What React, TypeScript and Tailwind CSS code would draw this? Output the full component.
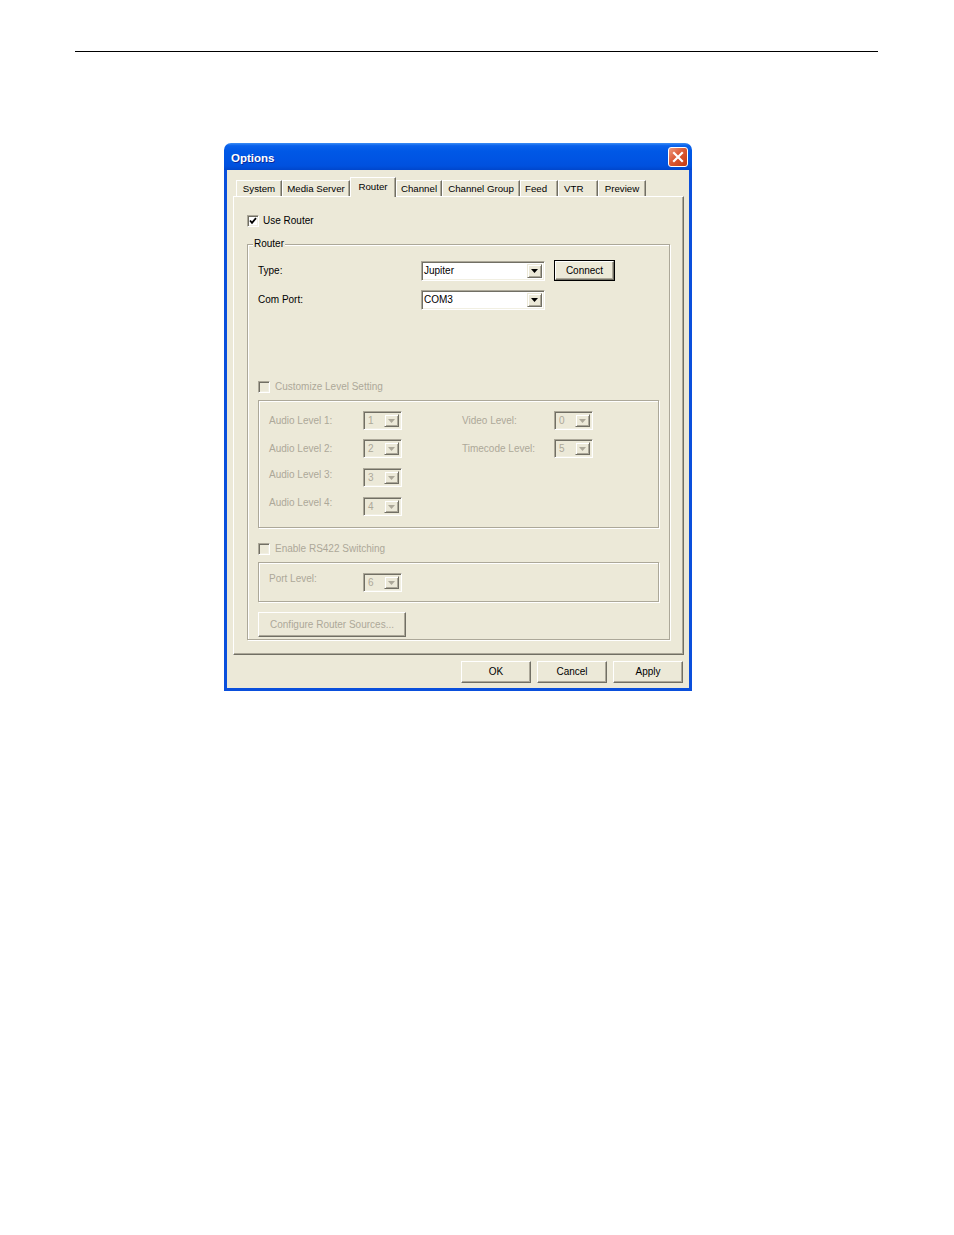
import React from 'react';

function Arrow({ disabled }: { disabled?: boolean }) {
  return (
    <div className="w-[15px] h-full shrink-0 bg-[#ECE9D8] border border-t-[#ECE9D8] border-l-[#ECE9D8] border-r-[#716F64] border-b-[#716F64] shadow-[inset_1px_1px_0_#ffffff,inset_-1px_-1px_0_#ACA899] flex items-center justify-center">
      <svg width="7" height="4" viewBox="0 0 7 4">
        <polygon points="0,0 7,0 3.5,4" fill={disabled ? '#ACA899' : '#000000'} />
      </svg>
    </div>
  );
}

function Combo({ value }: { value: string }) {
  return (
    <div className="w-[124px] h-[20px] bg-white border border-t-[#ACA899] border-l-[#ACA899] border-r-white border-b-white shadow-[inset_1px_1px_0_#716F64,inset_-1px_-1px_0_#F1EFE2] flex items-stretch p-[2px]">
      <div className="flex-1 leading-[14px] text-black">{value}</div>
      <Arrow />
    </div>
  );
}

function SmallCombo({ value }: { value: string }) {
  return (
    <div className="w-[39px] h-[19px] shrink-0 bg-[#ECE9D8] border border-t-[#ACA899] border-l-[#ACA899] border-r-white border-b-white shadow-[inset_1px_1px_0_#716F64,inset_-1px_-1px_0_#F1EFE2] flex items-stretch p-[2px]">
      <div className="flex-1 pl-[2px] leading-[13px] text-[#ACA899]">{value}</div>
      <Arrow disabled />
    </div>
  );
}

function CheckBox({ checked, disabled }: { checked?: boolean; disabled?: boolean }) {
  return (
    <div
      className={
        disabled
          ? 'w-[12px] h-[12px] shrink-0 bg-[#ECE9D8] border border-t-[#ACA899] border-l-[#ACA899] border-r-white border-b-white shadow-[inset_1px_1px_0_#716F64,inset_-1px_-1px_0_#F1EFE2]'
          : 'w-[12px] h-[12px] shrink-0 bg-white border border-t-[#ACA899] border-l-[#ACA899] border-r-white border-b-white shadow-[inset_1px_1px_0_#716F64,inset_-1px_-1px_0_#F1EFE2] flex items-center justify-center'
      }
    >
      {checked && (
        <svg width="8" height="8" viewBox="0 0 8 8">
          <path d="M1 3.5 L3 5.8 L7 1.2" stroke="#000" strokeWidth="1.8" fill="none" />
        </svg>
      )}
    </div>
  );
}

function Button({ label, disabled, w }: { label: string; disabled?: boolean; w: string }) {
  return (
    <div
      className={`${w} h-full bg-[#ECE9D8] border border-t-white border-l-white border-r-[#716F64] border-b-[#716F64] shadow-[inset_-1px_-1px_0_#ACA899] flex items-center justify-center leading-[12px] ${
        disabled ? 'text-[#ACA899]' : 'text-black'
      }`}
    >
      {label}
    </div>
  );
}

const tabs: { label: string; w: string; sel?: boolean; align: string }[] = [
  { label: 'System', w: 'w-[46px]', align: 'justify-center' },
  { label: 'Media Server', w: 'w-[68px]', align: 'justify-center' },
  { label: 'Router', w: 'w-[46px]', sel: true, align: 'justify-center' },
  { label: 'Channel', w: 'w-[46px]', align: 'justify-center' },
  { label: 'Channel Group', w: 'w-[78px]', align: 'justify-center' },
  { label: 'Feed', w: 'w-[38px]', align: 'justify-start pl-[4px]' },
  { label: 'VTR', w: 'w-[40px]', align: 'justify-start pl-[5px]' },
  { label: 'Preview', w: 'w-[48px]', align: 'justify-center' },
];

const etched = 'border border-[#ACA899] shadow-[inset_1px_1px_0_#ffffff,1px_1px_0_#ffffff]';

export default function App() {
  return (
    <div className="w-[954px] h-[1235px] bg-white pt-[51px] font-['Liberation_Sans',Arial,sans-serif] text-[10px] text-black">
      <div className="ml-[75px] w-[803px] h-px bg-black" />

      {/* dialog */}
      <div className="ml-[224px] mt-[91px] w-[468px] h-[548px] flex flex-col">
        {/* title bar */}
        <div className="h-[27px] shrink-0 rounded-t-[7px] bg-[linear-gradient(to_bottom,#3D8EF5_0%,#0A62EC_10%,#0058E6_30%,#0054E3_60%,#0051DE_85%,#0046CC_100%)] flex items-center justify-between pl-[7px] pr-[4px]">
          <span className="mt-[2px] text-white font-bold text-[11.5px] leading-[14px] [text-shadow:1px_1px_0_#0A2A9A]">Options</span>
          <div className="w-[20px] h-[20px] rounded-[3px] border border-white bg-[linear-gradient(135deg,#EE9A7E_0%,#DB5A36_45%,#C5390F_100%)] flex items-center justify-center">
            <svg width="12" height="12" viewBox="0 0 12 12">
              <path d="M2 2 L10 10 M10 2 L2 10" stroke="#ffffff" strokeWidth="2.2" strokeLinecap="square" />
            </svg>
          </div>
        </div>

        {/* body */}
        <div className="flex-1 bg-[#ECE9D8] border-l-[3px] border-r-[3px] border-b-[3px] border-[#0A4FDC] pt-[7px] flex flex-col">
          {/* tabs */}
          <div className="ml-[9px] h-[19px] flex items-end text-[9.7px]">
            {tabs.map((t) =>
              t.sel ? (
                <div
                  key={t.label}
                  className={`${t.w} h-[20px] -mb-px relative z-10 bg-[#ECE9D8] border-t border-l border-white border-r border-r-[#716F64] shadow-[inset_-1px_0_0_#ACA899] flex ${t.align} pt-[3px] leading-[12px] whitespace-nowrap`}
                >
                  {t.label}
                </div>
              ) : (
                <div
                  key={t.label}
                  className={`${t.w} h-[16px] bg-[#ECE9D8] border-t border-l border-white border-r border-r-[#716F64] shadow-[inset_-1px_0_0_#ACA899] flex items-center ${t.align} leading-[12px] whitespace-nowrap`}
                >
                  {t.label}
                </div>
              )
            )}
          </div>

          {/* panel */}
          <div className="ml-[6px] w-[451px] h-[459px] bg-[#ECE9D8] border border-t-white border-l-white border-r-[#716F64] border-b-[#716F64] shadow-[inset_-1px_-1px_0_#ACA899] flex flex-col">
            <div className="mt-[18px] ml-[13px] h-[12px] flex items-center gap-[4px]">
              <CheckBox checked />
              <span className="leading-[12px]">Use Router</span>
            </div>

            {/* Router group */}
            <div className={`mt-[17px] ml-[13px] w-[423px] h-[396px] ${etched} flex flex-col`}>
              <div className="-mt-[7px] ml-[5px] px-[1px] bg-[#ECE9D8] w-fit leading-[12px]">Router</div>

              <div className="mt-[10px] h-[21px] flex items-center pl-[10px]">
                <span className="w-[163px] leading-[12px]">Type:</span>
                <Combo value="Jupiter" />
                <div className="ml-[9px] w-[61px] h-[21px] border border-black">
                  <Button label="Connect" w="w-full" />
                </div>
              </div>

              <div className="mt-[9px] h-[20px] flex items-center pl-[10px]">
                <span className="w-[163px] leading-[12px]">Com Port:</span>
                <Combo value="COM3" />
              </div>

              <div className="mt-[71px] h-[12px] flex items-center gap-[5px] pl-[10px]">
                <CheckBox disabled />
                <span className="leading-[12px] text-[#ACA899]">Customize Level Setting</span>
              </div>

              <div className={`mt-[7px] ml-[10px] w-[401px] h-[128px] ${etched} flex flex-col text-[#ACA899]`}>
                <div className="mt-[10px] h-[19px] flex items-center pl-[10px]">
                  <span className="w-[94px] leading-[12px]">Audio Level 1:</span>
                  <SmallCombo value="1" />
                  <span className="ml-[60px] w-[92px] leading-[12px]">Video Level:</span>
                  <SmallCombo value="0" />
                </div>
                <div className="mt-[9px] h-[19px] flex items-center pl-[10px]">
                  <span className="w-[94px] leading-[12px]">Audio Level 2:</span>
                  <SmallCombo value="2" />
                  <span className="ml-[60px] w-[92px] leading-[12px]">Timecode Level:</span>
                  <SmallCombo value="5" />
                </div>
                <div className="mt-[10px] h-[19px] flex items-start pl-[10px]">
                  <span className="mt-[1px] w-[94px] leading-[12px]">Audio Level 3:</span>
                  <SmallCombo value="3" />
                </div>
                <div className="mt-[10px] h-[19px] flex items-start pl-[10px]">
                  <span className="w-[94px] leading-[12px]">Audio Level 4:</span>
                  <SmallCombo value="4" />
                </div>
              </div>

              <div className="mt-[15px] h-[12px] flex items-center gap-[5px] pl-[10px]">
                <CheckBox disabled />
                <span className="leading-[12px] text-[#ACA899]">Enable RS422 Switching</span>
              </div>

              <div className={`mt-[7px] ml-[10px] w-[401px] h-[40px] ${etched} flex flex-col text-[#ACA899]`}>
                <div className="mt-[10px] h-[19px] flex items-start pl-[10px]">
                  <span className="w-[94px] leading-[12px]">Port Level:</span>
                  <SmallCombo value="6" />
                </div>
              </div>

              <div className="mt-[10px] ml-[10px] w-[148px] h-[25px]">
                <Button label="Configure Router Sources..." disabled w="w-full" />
              </div>
            </div>
          </div>

          {/* bottom buttons */}
          <div className="mt-[6px] h-[22px] flex justify-end gap-[6px] pr-[6px]">
            <Button label="OK" w="w-[70px]" />
            <Button label="Cancel" w="w-[70px]" />
            <Button label="Apply" w="w-[70px]" />
          </div>
        </div>
      </div>
    </div>
  );
}
